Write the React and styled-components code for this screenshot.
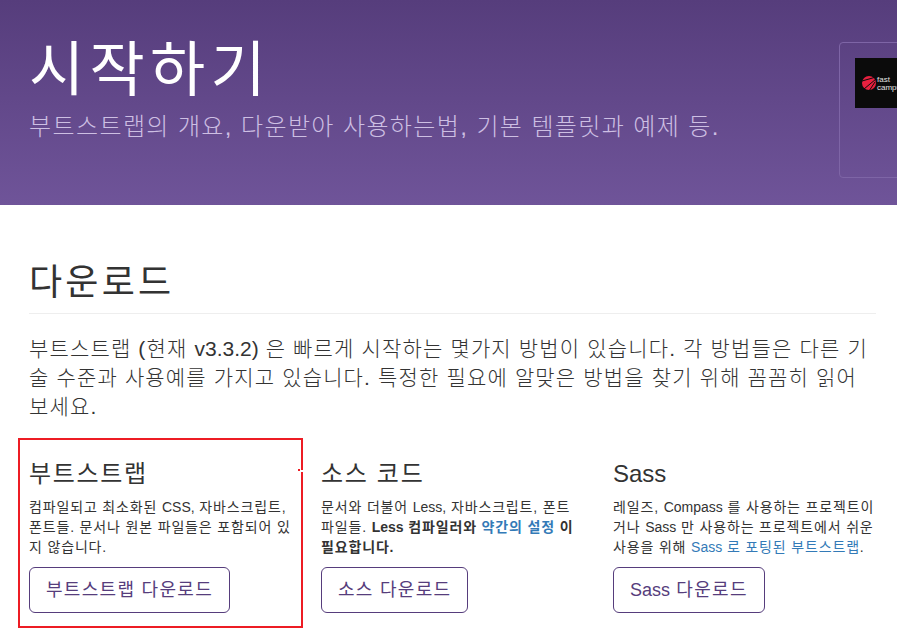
import React from "react";
import styled, { createGlobalStyle, css } from "styled-components";

const Global = createGlobalStyle`
  html, body {
    margin: 0;
    padding: 0;
    background: #fff;
    overflow-x: hidden;
  }
  body {
    font-family: "Liberation Sans", "Noto Sans CJK KR", sans-serif;
    font-size: 14px;
    line-height: 20px;
    color: #333;
  }
`;

// hangul in the reference runs wider than Noto, latin does not
const hangulSpacing = css`
  letter-spacing: 0.06em;
`;

const Latin = styled.span`
  letter-spacing: 0;
`;

const Page = styled.div`
  position: relative;
  width: 897px;
  height: 639px;
  overflow: hidden;
`;

const Header = styled.header`
  display: grid;
  grid-template-columns: 810px 150px;
  height: 205px;
  padding-left: 29px;
  box-sizing: border-box;
  background: linear-gradient(to bottom, #563d7c, #6f5499);
`;

const Title = styled.h1`
  margin: 0;
  padding-top: 38px;
  font-size: 60px;
  line-height: 66px;
  font-weight: 400;
  color: #fff;
  letter-spacing: 0.088em;
`;

const Lead = styled.p`
  margin: 6px 0 0;
  font-size: 24px;
  line-height: 34px;
  font-weight: 300;
  color: #cdbfe3;
  letter-spacing: 0.058em;
`;

const AdBox = styled.div`
  margin-top: 42px;
  width: 150px;
  height: 136px;
  box-sizing: border-box;
  padding: 15px;
  border: 1px solid #7e65a6;
  border-radius: 4px;
`;

const AdLogo = styled.svg`
  display: block;
  width: 130px;
  height: 50px;
`;

const Content = styled.main`
  padding: 56px 21px 0 29px;
`;

const SectionTitle = styled.h1`
  margin: 0;
  padding-bottom: 8px;
  border-bottom: 1px solid #eee;
  font-size: 36px;
  line-height: 44px;
  font-weight: 400;
  letter-spacing: 0.09em;
`;

const Intro = styled.p`
  margin: 20px 0 0;
  font-size: 21px;
  line-height: 29px;
  font-weight: 300;
  letter-spacing: 0.055em;
`;

const Columns = styled.div`
  display: grid;
  grid-template-columns: repeat(3, 262px);
  column-gap: 30px;
  margin-top: 40px;
`;

const Column = styled.section`
  display: flex;
  flex-direction: column;
  align-items: flex-start;
`;

const ColumnTitle = styled.h3`
  margin: 0 0 10px;
  font-size: 24px;
  line-height: 26px;
  font-weight: 400;
  letter-spacing: 0.07em;
`;

const Text = styled.p`
  margin: 0 0 10px;
  font-size: 14px;
  line-height: 20px;
  ${hangulSpacing}
`;

const Link = styled.a`
  color: #337ab7;
  text-decoration: none;
`;

const Button = styled.a`
  display: inline-block;
  padding: 10px 16px;
  border: 1px solid #563d7c;
  border-radius: 6px;
  font-size: 18px;
  line-height: 24px;
  color: #563d7c;
  letter-spacing: 0.072em;
`;

const Highlight = styled.div`
  position: absolute;
  left: 18px;
  top: 438px;
  width: 285px;
  height: 190px;
  box-sizing: border-box;
  border: 2px solid #ed1c24;

  /* gap in the right edge, with the stray red dot beside it */
  &::before {
    content: "";
    position: absolute;
    right: -2px;
    top: 30px;
    width: 2px;
    height: 2px;
    background: #fff;
  }
  &::after {
    content: "";
    position: absolute;
    right: 1px;
    top: 29px;
    width: 2px;
    height: 2px;
    background: #ed1c24;
  }
`;

const App = () => (
  <Page>
    <Global />
    <Header>
      <div>
        <Title>시작하기</Title>
        <Lead>부트스트랩의 개요, 다운받아 사용하는법, 기본 템플릿과 예제 등.</Lead>
      </div>
      <AdBox>
        <AdLogo viewBox="0 0 130 50">
          <rect width="130" height="50" fill="#0b0b0b" />
          <circle cx="14" cy="25" r="7" fill="#e8203f" />
          <path d="M21 19 L7 23 M21 21 L9 31 M20 24 L14 33" stroke="#0b0b0b" strokeWidth="1" />
          <text x="22" y="24" fontSize="8" fill="#e4e4e4" fontFamily="Liberation Sans">fast</text>
          <text x="22" y="32" fontSize="8" fill="#e4e4e4" fontFamily="Liberation Sans">campus</text>
        </AdLogo>
      </AdBox>
    </Header>
    <Content>
      <SectionTitle>다운로드</SectionTitle>
      <Intro>
        부트스트랩 (현재 <Latin>v3.3.2)</Latin> 은 빠르게 시작하는 몇가지 방법이 있습니다. 각 방법들은 다른 기술 수준과 사용예를 가지고 있습니다. 특정한 필요에 알맞은 방법을 찾기 위해 꼼꼼히 읽어 보세요.
      </Intro>
      <Columns>
        <Column>
          <ColumnTitle>부트스트랩</ColumnTitle>
          <Text>컴파일되고 최소화된 <Latin>CSS,</Latin> 자바스크립트, 폰트들. 문서나 원본 파일들은 포함되어 있지 않습니다.</Text>
          <Button>부트스트랩 다운로드</Button>
        </Column>
        <Column>
          <ColumnTitle>소스 코드</ColumnTitle>
          <Text>
            문서와 더불어 <Latin>Less,</Latin> 자바스크립트, 폰트 파일들. <strong><Latin>Less</Latin> 컴파일러와 <Link>약간의 설정</Link> 이 필요합니다.</strong>
          </Text>
          <Button>소스 다운로드</Button>
        </Column>
        <Column>
          <ColumnTitle><Latin>Sass</Latin></ColumnTitle>
          <Text>
            레일즈, <Latin>Compass</Latin> 를 사용하는 프로젝트이거나 <Latin>Sass</Latin> 만 사용하는 프로젝트에서 쉬운 사용을 위해 <Link><Latin>Sass</Latin> 로 포팅된 부트스트랩</Link>.
          </Text>
          <Button><Latin>Sass</Latin> 다운로드</Button>
        </Column>
      </Columns>
    </Content>
    <Highlight />
  </Page>
);

export default App;
